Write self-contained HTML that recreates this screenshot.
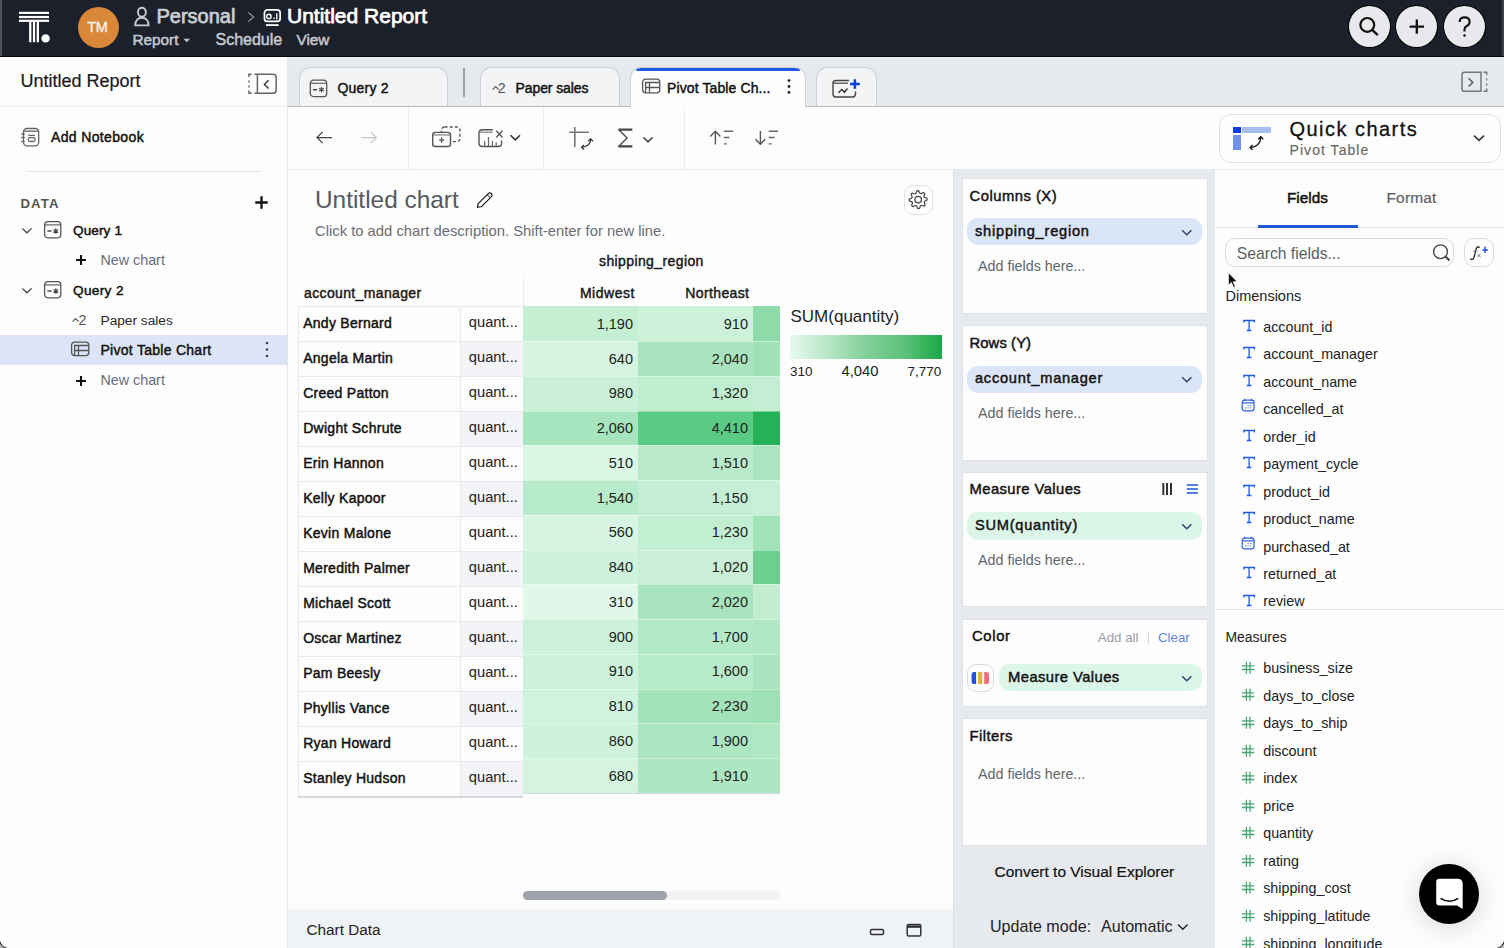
<!DOCTYPE html>
<html><head><meta charset="utf-8">
<style>
*{box-sizing:border-box;margin:0;padding:0}
html,body{width:1504px;height:948px;overflow:hidden;background:#b8b8b8}
body{font-family:"Liberation Sans",sans-serif;color:#1a1a1a;position:relative}
.a{position:absolute}
.t{position:absolute;white-space:nowrap;line-height:1}
#app{position:absolute;left:0;top:0;width:1504px;height:948px;background:#fdfdfd;border-radius:0 0 9px 9px;overflow:hidden;box-shadow:0 0 0 1px #222}

</style></head><body>
<div id="app">
<div class="a" style="left:0px;top:0px;width:1504px;height:57px;background:#1c202b;"></div>
<div class="a" style="left:0px;top:56px;width:1504px;height:1px;background:#07080b;"></div>
<div class="a" style="left:0px;top:0px;width:1.6px;height:56px;background:#4f535d;"></div>
<div class="a" style="left:1502px;top:0px;width:2px;height:56px;background:#3d414b;"></div>
<svg class="a" style="left:16px;top:8px;" width="40" height="40" viewBox="0 0 40 40" fill="none">
<rect x="3" y="3.8" width="30" height="2.2" fill="#fff"/>
<rect x="3" y="7.9" width="30" height="2.2" fill="#fff"/>
<rect x="3" y="11.7" width="30" height="2.2" fill="#fff"/>
<rect x="13.1" y="13" width="2.3" height="21.2" fill="#fff"/>
<rect x="16.9" y="13" width="2.2" height="21.2" fill="#fff"/>
<rect x="20.7" y="13" width="2.3" height="21.2" fill="#fff"/>
<circle cx="29.6" cy="30.4" r="4.2" fill="#fff"/></svg>
<div class="a" style="left:77.5px;top:6.5px;width:41px;height:41px;background:#d9883a;border-radius:50%"></div>
<div class="t" style="left:87.2px;top:19.93px;font-size:14.5px;color:#fdf3ea;letter-spacing:-0.3px;-webkit-text-stroke:0.35px #fdf3ea;">TM</div>
<svg class="a" style="left:132px;top:6px;" width="20" height="22" viewBox="0 0 20 22" fill="none"><rect x="6" y="1.8" width="7.8" height="8.8" rx="3.9" stroke="#c9ccd1" stroke-width="1.9"/>
<path d="M3.2 19.4 C3.2 14.5 6.3 11.8 9.9 11.8 C13.5 11.8 16.6 14.5 16.6 19.4 Z" stroke="#c9ccd1" stroke-width="1.9" stroke-linejoin="round"/></svg>
<div class="t" style="left:156.5px;top:5.77px;font-size:20px;color:#c9cdd2;-webkit-text-stroke:0.75px #c9cdd2;">Personal</div>
<svg class="a" style="left:246px;top:11px;" width="10" height="12" viewBox="0 0 10 12" fill="none"><path d="M2.3 1.6 L7.6 6.1 L2.3 10.6" stroke="#8a8f98" stroke-width="1.3"/></svg>
<svg class="a" style="left:262px;top:7px;" width="21" height="21" viewBox="0 0 21 21" fill="none"><rect x="2.45" y="2.85" width="15.7" height="11.6" rx="3" stroke="#fff" stroke-width="1.7"/>
<circle cx="6.9" cy="9.4" r="2.2" stroke="#fff" stroke-width="1.4"/>
<rect x="11.4" y="10.5" width="1.3" height="1.6" fill="#fff"/>
<rect x="14.1" y="6.2" width="1.3" height="6.4" fill="#fff"/>
<rect x="4" y="17.2" width="12.6" height="1.8" fill="#fff"/></svg>
<div class="t" style="left:287.0px;top:4.92px;font-size:21px;color:#ffffff;-webkit-text-stroke:0.75px #fff;">Untitled Report</div>
<div class="t" style="left:132.5px;top:32.05px;font-size:15.3px;color:#c5c9cf;-webkit-text-stroke:0.5px #c5c9cf;">Report</div>
<svg class="a" style="left:183px;top:38px;" width="8" height="5" viewBox="0 0 8 5" fill="none"><path d="M0.5 0.8 L7 0.8 L3.75 4.2 Z" fill="#c5c9cf"/></svg>
<div class="t" style="left:215.5px;top:32.26px;font-size:16px;color:#c5c9cf;-webkit-text-stroke:0.5px #c5c9cf;">Schedule</div>
<div class="t" style="left:296.5px;top:32.05px;font-size:15.3px;color:#c5c9cf;-webkit-text-stroke:0.5px #c5c9cf;">View</div>
<div class="a" style="left:1348.8px;top:6.3px;width:41px;height:41px;background:#e8e9ec;border-radius:50%;box-shadow:0 0 0 1px #000"></div>
<div class="a" style="left:1395.9px;top:6.3px;width:41px;height:41px;background:#e8e9ec;border-radius:50%;box-shadow:0 0 0 1px #000"></div>
<div class="a" style="left:1443.8px;top:6.3px;width:41px;height:41px;background:#e8e9ec;border-radius:50%;box-shadow:0 0 0 1px #000"></div>
<svg class="a" style="left:1355px;top:12px;" width="30" height="30" viewBox="0 0 30 30" fill="none"><circle cx="12.3" cy="12.9" r="6.9" stroke="#111" stroke-width="2.2"/><path d="M17.2 17.8 L22.8 23.2" stroke="#111" stroke-width="2.3"/></svg>
<svg class="a" style="left:1402px;top:12px;" width="30" height="30" viewBox="0 0 30 30" fill="none"><path d="M14.8 7.4 V21.8 M7.6 14.6 H22" stroke="#111" stroke-width="2.3"/></svg>
<svg class="a" style="left:1450px;top:10px;" width="30" height="30" viewBox="0 0 30 30" fill="none"><path d="M9.6 11.9 Q9.6 7.4 14.6 7.4 Q19.6 7.4 19.6 11.9 Q19.6 14.6 16.8 16 Q14.5 17.1 14.5 19.5 V21.4" stroke="#111" stroke-width="2.1"/><circle cx="14.5" cy="25.5" r="1.25" fill="#111"/></svg>
<div class="a" style="left:0px;top:57px;width:287px;height:891px;background:#fdfdfd;"></div>
<div class="a" style="left:287px;top:57px;width:1px;height:891px;background:#e4e6ea;"></div>
<div class="a" style="left:0px;top:106px;width:287px;height:1px;background:#eceef1;"></div>
<div class="t" style="left:20.5px;top:72.06px;font-size:18px;color:#1a1a1a;-webkit-text-stroke:0.2px #1a1a1a;">Untitled Report</div>
<svg class="a" style="left:246px;top:72px;" width="34" height="24" viewBox="0 0 34 24" fill="none"><path d="M5.6 2.3 H3 V5" stroke="#666" stroke-width="1.5"/>
<path d="M3 8.5 V10.5 M3 13.5 V15.5" stroke="#666" stroke-width="1.5"/>
<path d="M3 18.5 V21.3 H5.6" stroke="#666" stroke-width="1.5"/>
<path d="M8.5 2.3 H27 Q30.2 2.3 30.2 5.5 V18.1 Q30.2 21.3 27 21.3 H8.5" stroke="#666" stroke-width="1.5"/>
<path d="M11.4 2.3 V21.3" stroke="#666" stroke-width="1.5"/>
<path d="M22.6 8.3 L18.4 12.4 L22.6 16.6" stroke="#333" stroke-width="1.4"/></svg>
<svg class="a" style="left:19px;top:126px;" width="22" height="22" viewBox="0 0 22 22" fill="none"><rect x="4.5" y="2.5" width="15.2" height="17.3" rx="3.5" stroke="#666" stroke-width="1.3"/>
<path d="M4.8 5.2 H19.4" stroke="#666" stroke-width="1.3"/>
<path d="M2.4 8 H5.6 M2.4 11.5 H5.6 M2.4 15.5 H5.6" stroke="#666" stroke-width="1.3"/>
<path d="M9.3 9.4 H16" stroke="#666" stroke-width="1.3"/>
<rect x="9.3" y="11.6" width="6.7" height="3.9" rx="1.5" stroke="#666" stroke-width="1.3"/></svg>
<div class="t" style="left:51.0px;top:130.45px;font-size:14px;color:#111;letter-spacing:0.355px;-webkit-text-stroke:0.45px #111;">Add Notebook</div>
<div class="a" style="left:26px;top:171px;width:235px;height:1px;background:#e6e8eb;"></div>
<div class="t" style="left:20.5px;top:196.73px;font-size:13.2px;color:#555;font-weight:bold;letter-spacing:1.1px;">DATA</div>
<svg class="a" style="left:253px;top:194px;" width="17" height="17" viewBox="0 0 17 17" fill="none"><path d="M8.5 2.3 V14.7 M2.3 8.5 H14.7" stroke="#111" stroke-width="2.3"/></svg>
<svg class="a" style="left:21px;top:227px;" width="12" height="8" viewBox="0 0 12 8" fill="none"><path d="M1.2 1.4 L5.9 5.8 L10.6 1.4" stroke="#444" stroke-width="1.3"/></svg>
<svg class="a" style="left:42.5px;top:218.5px;" width="20" height="20" viewBox="0 0 20 20" fill="none"><rect x="1.6" y="2.6" width="16.2" height="16.2" rx="3.2" stroke="#555" stroke-width="1.3"/>
<path d="M1.8 5.9 H17.6" stroke="#555" stroke-width="1.1"/>
<path d="M4.4 12 H8.6" stroke="#444" stroke-width="1.5"/>
<path d="M12.8 9.2 V14.8 M10.4 10.6 L15.2 13.4 M15.2 10.6 L10.4 13.4" stroke="#444" stroke-width="1.1"/></svg>
<div class="t" style="left:73.0px;top:224.29px;font-size:13.6px;color:#111;letter-spacing:0.1px;-webkit-text-stroke:0.45px #111;">Query 1</div>
<svg class="a" style="left:74.5px;top:254px;" width="12" height="12" viewBox="0 0 12 12" fill="none"><path d="M6 1 V11 M1 6 H11" stroke="#111" stroke-width="2.1"/></svg>
<div class="t" style="left:100.5px;top:253.20px;font-size:14.3px;color:#6a6e74;">New chart</div>
<svg class="a" style="left:21px;top:287px;" width="12" height="8" viewBox="0 0 12 8" fill="none"><path d="M1.2 1.4 L5.9 5.8 L10.6 1.4" stroke="#444" stroke-width="1.3"/></svg>
<svg class="a" style="left:42.5px;top:278.5px;" width="20" height="20" viewBox="0 0 20 20" fill="none"><rect x="1.6" y="2.6" width="16.2" height="16.2" rx="3.2" stroke="#555" stroke-width="1.3"/>
<path d="M1.8 5.9 H17.6" stroke="#555" stroke-width="1.1"/>
<path d="M4.4 12 H8.6" stroke="#444" stroke-width="1.5"/>
<path d="M12.8 9.2 V14.8 M10.4 10.6 L15.2 13.4 M15.2 10.6 L10.4 13.4" stroke="#444" stroke-width="1.1"/></svg>
<div class="t" style="left:73.0px;top:284.19px;font-size:13.6px;color:#111;letter-spacing:0.35px;-webkit-text-stroke:0.45px #111;">Query 2</div>
<svg class="a" style="left:71px;top:316px;" width="10" height="8" viewBox="0 0 10 8" fill="none"><path d="M1.5 5.6 L4.6 2.6 L7.7 5.6" stroke="#555" stroke-width="1.1"/></svg>
<div class="t" style="left:78.6px;top:313.48px;font-size:14.2px;color:#555;">2</div>
<div class="t" style="left:100.5px;top:313.90px;font-size:13.7px;color:#2a2a2a;">Paper sales</div>
<div class="a" style="left:0px;top:335px;width:287px;height:30px;background:#dce5f7;"></div>
<svg class="a" style="left:70px;top:340px;" width="20" height="18" viewBox="0 0 20 18" fill="none"><rect x="1.6" y="2.2" width="17.2" height="13.4" rx="3" stroke="#555" stroke-width="1.3"/>
<path d="M4.6 15.4 V5.5 H18.5 M8.5 5.5 V15.4 M4.6 10.5 H18.5" stroke="#555" stroke-width="1.3"/></svg>
<div class="t" style="left:100.5px;top:343.45px;font-size:14px;color:#111;letter-spacing:0.275px;-webkit-text-stroke:0.45px #111;">Pivot Table Chart</div>
<svg class="a" style="left:264px;top:340px;" width="6" height="20" viewBox="0 0 6 20" fill="none"><circle cx="3" cy="3" r="1.3" fill="#444"/><circle cx="3" cy="9.5" r="1.3" fill="#444"/><circle cx="3" cy="16" r="1.3" fill="#444"/></svg>
<svg class="a" style="left:74.5px;top:374.5px;" width="12" height="12" viewBox="0 0 12 12" fill="none"><path d="M6 1 V11 M1 6 H11" stroke="#111" stroke-width="2.1"/></svg>
<div class="t" style="left:100.5px;top:373.20px;font-size:14.3px;color:#6a6e74;">New chart</div>
<div class="a" style="left:288px;top:57px;width:1216px;height:49px;background:#e6e9ee;"></div>
<div class="a" style="left:288px;top:106px;width:1216px;height:1px;background:#b9bdc3;"></div>
<div class="a" style="left:298.5px;top:67px;width:149.5px;height:39px;background:#f3f4f6;border:1px solid #cdd1d8;border-bottom:none;border-radius:11px 11px 0 0"></div>
<svg class="a" style="left:308px;top:77px;" width="22" height="22" viewBox="0 0 22 22" fill="none"><rect x="2.3" y="3.2" width="16.4" height="16.4" rx="3.2" stroke="#555" stroke-width="1.3"/>
<path d="M2.5 6.3 H18.5" stroke="#555" stroke-width="1.1"/>
<path d="M5 12.7 H9.2" stroke="#444" stroke-width="1.5"/>
<path d="M13.5 9.9 V15.5 M11.1 11.3 L15.9 14.1 M15.9 11.3 L11.1 14.1" stroke="#444" stroke-width="1.1"/></svg>
<div class="t" style="left:337.5px;top:81.35px;font-size:14px;color:#111;letter-spacing:0.2px;-webkit-text-stroke:0.45px #111;">Query 2</div>
<div class="a" style="left:462.5px;top:67.5px;width:2px;height:29px;background:#9da1a8;"></div>
<div class="a" style="left:479.5px;top:67px;width:140.5px;height:39px;background:#f3f4f6;border:1px solid #cdd1d8;border-bottom:none;border-radius:11px 11px 0 0"></div>
<svg class="a" style="left:490.5px;top:84px;" width="10" height="8" viewBox="0 0 10 8" fill="none"><path d="M1.5 5.6 L4.6 2.6 L7.7 5.6" stroke="#555" stroke-width="1.1"/></svg>
<div class="t" style="left:497.8px;top:81.18px;font-size:14.2px;color:#555;">2</div>
<div class="t" style="left:515.5px;top:81.35px;font-size:14px;color:#111;letter-spacing:-0.09px;-webkit-text-stroke:0.45px #111;">Paper sales</div>
<div class="a" style="left:630px;top:67px;width:175.5px;height:40px;background:#fdfdfd;border:1px solid #cdd1d8;border-bottom:none;border-radius:11px 11px 0 0;overflow:hidden"><div class="a" style="left:5px;top:0;width:164px;height:2.5px;background:#1f5ae6;border-radius:2px"></div></div>
<svg class="a" style="left:641px;top:77px;" width="20" height="18" viewBox="0 0 20 18" fill="none"><rect x="1.6" y="2.2" width="17.2" height="13.6" rx="3" stroke="#555" stroke-width="1.3"/>
<path d="M4.6 15.6 V5.5 H18.5 M8.5 5.5 V15.6 M4.6 10.5 H18.5" stroke="#555" stroke-width="1.3"/></svg>
<div class="t" style="left:667.0px;top:81.15px;font-size:14px;color:#111;letter-spacing:0.112px;-webkit-text-stroke:0.45px #111;">Pivot Table Ch...</div>
<svg class="a" style="left:786px;top:78px;" width="6" height="18" viewBox="0 0 6 18" fill="none"><circle cx="3" cy="2.6" r="1.4" fill="#222"/><circle cx="3" cy="8.5" r="1.4" fill="#222"/><circle cx="3" cy="14.4" r="1.4" fill="#222"/></svg>
<div class="a" style="left:815.5px;top:67px;width:61.5px;height:39px;background:#f3f4f6;border:1px solid #cdd1d8;border-bottom:none;border-radius:11px 11px 0 0"></div>
<svg class="a" style="left:830px;top:76px;" width="34" height="24" viewBox="0 0 34 24" fill="none"><path d="M19 4.5 H6 Q3 4.5 3 7.5 V18 Q3 21 6 21 H22.5 Q25.5 21 25.5 18 V15.5" stroke="#444" stroke-width="1.4"/>
<path d="M3.5 7.2 H18" stroke="#444" stroke-width="1.2"/>
<path d="M8.3 16.7 L11.8 13.4 L14.3 16.3 L17.5 12.5" stroke="#333" stroke-width="1.4"/>
<path d="M24.9 3.3 V12.8 M20 8 H29.8" stroke="#0b3ee0" stroke-width="2.5"/></svg>
<svg class="a" style="left:1460px;top:70px;" width="34" height="25" viewBox="0 0 34 25" fill="none"><path d="M4.4 2.3 H21 V21.3 H4.4 Q2 21.3 2 18.9 V4.7 Q2 2.3 4.4 2.3 Z" stroke="#777" stroke-width="1.5"/>
<path d="M23.5 2.3 H26.7 V5 M26.7 8.5 V10.5 M26.7 13.5 V15.5 M26.7 18.5 V21.3 H23.5" stroke="#777" stroke-width="1.5"/>
<path d="M8.6 8.3 L12.8 12.4 L8.6 16.6" stroke="#555" stroke-width="1.4"/></svg>
<div class="a" style="left:288px;top:107px;width:1216px;height:63px;background:#fdfdfd;"></div>
<div class="a" style="left:288px;top:169px;width:1216px;height:1px;background:#e8eaee;"></div>
<div class="a" style="left:408px;top:107px;width:1px;height:62px;background:#eceef1;"></div>
<div class="a" style="left:543px;top:107px;width:1px;height:62px;background:#eceef1;"></div>
<div class="a" style="left:684px;top:107px;width:1px;height:62px;background:#eceef1;"></div>
<svg class="a" style="left:312px;top:128px;" width="24" height="20" viewBox="0 0 24 20" fill="none"><path d="M20 9.5 H5 M10.6 3.9 L5 9.5 L10.6 15.1" stroke="#444" stroke-width="1.25"/></svg>
<svg class="a" style="left:357px;top:128px;" width="24" height="20" viewBox="0 0 24 20" fill="none"><path d="M4.4 9.5 H19.4 M13.8 3.9 L19.4 9.5 L13.8 15.1" stroke="#c4c7cc" stroke-width="1.25"/></svg>
<svg class="a" style="left:430px;top:124px;" width="34" height="26" viewBox="0 0 34 26" fill="none"><rect x="11.5" y="3" width="18.4" height="14.6" rx="3" stroke="#555" stroke-width="1.4" stroke-dasharray="3 2.2"/>
<rect x="2.7" y="8.4" width="17.8" height="14.1" rx="2.6" fill="#fdfdfd" stroke="#555" stroke-width="1.4"/>
<path d="M3 10.9 H20.2" stroke="#888" stroke-width="1.3"/>
<path d="M11.6 13.5 V18.8 M9 16.1 H14.3" stroke="#555" stroke-width="1.4"/></svg>
<svg class="a" style="left:476px;top:126px;" width="48" height="24" viewBox="0 0 48 24" fill="none"><path d="M16.8 3.8 H6.5 Q3 3.8 3 7.3 V17 Q3 20.5 6.5 20.5 H22.2 Q25.6 20.5 25.6 17 V14.5" stroke="#555" stroke-width="1.4"/>
<path d="M3.5 6.2 H16.8" stroke="#888" stroke-width="1.3"/>
<path d="M8.7 20 V15 M12.5 20 V11.1 M16.4 20 V15 M20.2 20 V16.3" stroke="#666" stroke-width="1.2"/>
<path d="M20.2 4.8 L26.5 11.5 M26.5 4.8 L20.2 11.5" stroke="#555" stroke-width="1.3"/>
<path d="M34.5 9.2 L39.3 13.9 L44 9.2" stroke="#333" stroke-width="1.5"/></svg>
<svg class="a" style="left:566px;top:124px;" width="30" height="28" viewBox="0 0 30 28" fill="none"><path d="M8.8 3 V23 M3.3 8.3 H22.9" stroke="#777" stroke-width="1.6"/>
<path d="M15.6 23.2 C19 23.2 24.6 21.5 24.6 15" stroke="#333" stroke-width="1.3"/>
<path d="M22.2 17.2 L24.6 14.8 L27 17.2 M18 21 L15.6 23.3 L18 25.6" stroke="#333" stroke-width="1.3"/></svg>
<svg class="a" style="left:615px;top:127px;" width="42" height="22" viewBox="0 0 42 22" fill="none"><path d="M3.4 2.6 H17.3 M3.4 19.4 H17.3" stroke="#444" stroke-width="2.1"/>
<path d="M3.8 2.7 L12.1 11 L3.8 19.3" stroke="#444" stroke-width="1.3"/>
<path d="M28.5 10.5 L33 14.8 L37.5 10.5" stroke="#333" stroke-width="1.5"/></svg>
<svg class="a" style="left:706px;top:127px;" width="32" height="20" viewBox="0 0 32 20" fill="none"><path d="M9.4 17.5 V4 M4.2 9.5 L9.4 4.3 L14.4 9.5" stroke="#555" stroke-width="1.4"/>
<path d="M17.9 4.3 H27.2 M17.9 10.5 H23.3 M17.9 16.9 H20.9" stroke="#666" stroke-width="1.4"/></svg>
<svg class="a" style="left:751px;top:127px;" width="32" height="20" viewBox="0 0 32 20" fill="none"><path d="M9.4 4 V17.5 M4.4 12.2 L9.4 17.2 L14.2 12.2" stroke="#555" stroke-width="1.4"/>
<path d="M17.7 4.3 H27.1 M17.7 10.5 H23.5 M17.7 16.9 H20.8" stroke="#666" stroke-width="1.4"/></svg>
<div class="a" style="left:1218.5px;top:113.5px;width:282px;height:49px;background:#fdfdfd;border:1px solid #dcdfe4;border-radius:12px"></div>
<div class="a" style="left:1233.2px;top:127.1px;width:7.6px;height:5.7px;background:#0a3de0;"></div>
<div class="a" style="left:1242.3px;top:127.1px;width:29.1px;height:5.7px;background:#a6bff0;"></div>
<div class="a" style="left:1233.2px;top:134.9px;width:7.6px;height:14.7px;background:#6f91ea;"></div>
<svg class="a" style="left:1246px;top:133px;" width="20" height="18" viewBox="0 0 20 18" fill="none"><path d="M4.3 14.3 C9 14.3 14.7 11.5 14.7 3.8" stroke="#111" stroke-width="1.3"/>
<path d="M12.2 6.2 L14.7 3.6 L17.2 6.2 M6.6 12 L4.1 14.4 L6.6 16.8" stroke="#111" stroke-width="1.3"/></svg>
<div class="t" style="left:1289.5px;top:119.07px;font-size:20px;color:#111;letter-spacing:1.464px;-webkit-text-stroke:0.3px #111;">Quick charts</div>
<div class="t" style="left:1289.5px;top:142.95px;font-size:14px;color:#666;letter-spacing:1.06px;-webkit-text-stroke:0.15px #666;">Pivot Table</div>
<svg class="a" style="left:1470px;top:130px;" width="18" height="14" viewBox="0 0 18 14" fill="none"><path d="M4 5.6 L9 10.4 L14 5.6" stroke="#333" stroke-width="1.5"/></svg>
<div class="a" style="left:288px;top:170px;width:665px;height:739px;background:#fdfdfd;"></div>
<div class="t" style="left:315.0px;top:187.85px;font-size:24.4px;color:#555a60;">Untitled chart</div>
<svg class="a" style="left:473px;top:190px;" width="22" height="22" viewBox="0 0 22 22" fill="none"><path d="M4.5 17.3 L5.1 13.7 L15.6 3.3 Q16.8 2.3 18 3.3 L18.7 4 Q19.7 5.2 18.7 6.4 L8.2 16.8 Z" stroke="#111" stroke-width="1.15" stroke-linejoin="round"/>
<path d="M14.3 4.8 L17.2 7.7" stroke="#111" stroke-width="1"/></svg>
<div class="a" style="left:903.5px;top:184.5px;width:29.5px;height:30px;border:1px solid #dfe2e7;border-radius:9px;background:#fdfdfd"></div>
<svg class="a" style="left:903px;top:184px;" width="31" height="31" viewBox="0 0 31 31" fill="none"><path d="M13.89 6.80 L15.64 6.71 L16.80 9.20 L18.02 9.63 L20.50 8.45 L21.79 9.62 L20.86 12.21 L21.41 13.38 L24.00 14.29 L24.09 16.04 L21.60 17.20 L21.17 18.42 L22.35 20.90 L21.18 22.19 L18.59 21.26 L17.42 21.81 L16.51 24.40 L14.76 24.49 L13.60 22.00 L12.38 21.57 L9.90 22.75 L8.61 21.58 L9.54 18.99 L8.99 17.82 L6.40 16.91 L6.31 15.16 L8.80 14.00 L9.23 12.78 L8.05 10.30 L9.22 9.01 L11.81 9.94 L12.98 9.39 Z" stroke="#444" stroke-width="1.2" stroke-linejoin="round"/><circle cx="15.2" cy="15.6" r="3.3" stroke="#444" stroke-width="1.3"/></svg>
<div class="t" style="left:315.0px;top:223.87px;font-size:14.8px;color:#6a6e74;">Click to add chart description. Shift-enter for new line.</div>
<div class="t" style="left:599.0px;top:253.55px;font-size:14px;color:#1a1a1a;letter-spacing:0.393px;-webkit-text-stroke:0.45px #1a1a1a;">shipping_region</div>
<div class="t" style="left:304.0px;top:285.65px;font-size:14px;color:#1a1a1a;letter-spacing:0.364px;-webkit-text-stroke:0.45px #1a1a1a;">account_manager</div>
<div class="t" style="right:869.0px;top:285.65px;font-size:14px;color:#1a1a1a;text-align:right;letter-spacing:0.533px;-webkit-text-stroke:0.45px #1a1a1a;">Midwest</div>
<div class="t" style="right:754.6px;top:285.65px;font-size:14px;color:#1a1a1a;text-align:right;letter-spacing:0.387px;-webkit-text-stroke:0.45px #1a1a1a;">Northeast</div>
<div class="a" style="left:523px;top:278px;width:1px;height:28px;background:#e6e8ee;"></div>
<div class="a" style="left:298px;top:306px;width:225px;height:491px;background:#fdfdfd;"></div>
<div class="a" style="left:298px;top:306px;width:225px;height:1px;background:#e8e9ee;"></div>
<div class="a" style="left:523px;top:306.40px;width:115px;height:34.75px;background:#c4efd3;"></div>
<div class="a" style="left:638px;top:306.40px;width:115px;height:34.75px;background:#cdf2da;"></div>
<div class="a" style="left:753px;top:306.40px;width:27px;height:34.75px;background:#8edbaa;"></div>
<div class="t" style="left:303.2px;top:315.55px;font-size:14px;color:#111;letter-spacing:0.27px;-webkit-text-stroke:0.45px #111;">Andy Bernard</div>
<div class="t" style="left:468.8px;top:314.96px;font-size:14.7px;color:#222;">quant...</div>
<div class="t" style="right:871.0px;top:316.83px;font-size:14.5px;color:#222;text-align:right;">1,190</div>
<div class="t" style="right:756.0px;top:316.83px;font-size:14.5px;color:#222;text-align:right;">910</div>
<div class="a" style="left:461px;top:341px;width:62px;height:35px;background:#f3f4f7;"></div>
<div class="a" style="left:298px;top:341px;width:225px;height:1px;background:#e8e9ee;"></div>
<div class="a" style="left:523px;top:341.15px;width:115px;height:34.75px;background:#d6f5e1;"></div>
<div class="a" style="left:638px;top:341.15px;width:115px;height:34.75px;background:#a8e5be;"></div>
<div class="a" style="left:753px;top:341.15px;width:27px;height:34.75px;background:#a0e2b8;"></div>
<div class="a" style="left:523px;top:341.15px;width:257px;height:1px;background:rgba(255,255,255,0.4);"></div>
<div class="t" style="left:303.2px;top:350.55px;font-size:14px;color:#111;letter-spacing:0.27px;-webkit-text-stroke:0.45px #111;">Angela Martin</div>
<div class="t" style="left:468.8px;top:349.96px;font-size:14.7px;color:#222;">quant...</div>
<div class="t" style="right:871.0px;top:351.58px;font-size:14.5px;color:#222;text-align:right;">640</div>
<div class="t" style="right:756.0px;top:351.58px;font-size:14.5px;color:#222;text-align:right;">2,040</div>
<div class="a" style="left:298px;top:376px;width:225px;height:1px;background:#e8e9ee;"></div>
<div class="a" style="left:523px;top:375.90px;width:115px;height:34.75px;background:#caf1d8;"></div>
<div class="a" style="left:638px;top:375.90px;width:115px;height:34.75px;background:#bfedd0;"></div>
<div class="a" style="left:753px;top:375.90px;width:27px;height:34.75px;background:#c4eed4;"></div>
<div class="a" style="left:523px;top:375.90px;width:257px;height:1px;background:rgba(255,255,255,0.4);"></div>
<div class="t" style="left:303.2px;top:385.55px;font-size:14px;color:#111;letter-spacing:0.27px;-webkit-text-stroke:0.45px #111;">Creed Patton</div>
<div class="t" style="left:468.8px;top:384.96px;font-size:14.7px;color:#222;">quant...</div>
<div class="t" style="right:871.0px;top:386.33px;font-size:14.5px;color:#222;text-align:right;">980</div>
<div class="t" style="right:756.0px;top:386.33px;font-size:14.5px;color:#222;text-align:right;">1,320</div>
<div class="a" style="left:461px;top:411px;width:62px;height:35px;background:#f3f4f7;"></div>
<div class="a" style="left:298px;top:411px;width:225px;height:1px;background:#e8e9ee;"></div>
<div class="a" style="left:523px;top:410.65px;width:115px;height:34.75px;background:#a7e5be;"></div>
<div class="a" style="left:638px;top:410.65px;width:115px;height:34.75px;background:#5acb84;"></div>
<div class="a" style="left:753px;top:410.65px;width:27px;height:34.75px;background:#25b256;"></div>
<div class="a" style="left:523px;top:410.65px;width:257px;height:1px;background:rgba(255,255,255,0.4);"></div>
<div class="t" style="left:303.2px;top:420.55px;font-size:14px;color:#111;letter-spacing:0.27px;-webkit-text-stroke:0.45px #111;">Dwight Schrute</div>
<div class="t" style="left:468.8px;top:419.96px;font-size:14.7px;color:#222;">quant...</div>
<div class="t" style="right:871.0px;top:421.08px;font-size:14.5px;color:#222;text-align:right;">2,060</div>
<div class="t" style="right:756.0px;top:421.08px;font-size:14.5px;color:#222;text-align:right;">4,410</div>
<div class="a" style="left:298px;top:446px;width:225px;height:1px;background:#e8e9ee;"></div>
<div class="a" style="left:523px;top:445.40px;width:115px;height:34.75px;background:#daf6e4;"></div>
<div class="a" style="left:638px;top:445.40px;width:115px;height:34.75px;background:#b9ebcb;"></div>
<div class="a" style="left:753px;top:445.40px;width:27px;height:34.75px;background:#a9e6c0;"></div>
<div class="a" style="left:523px;top:445.40px;width:257px;height:1px;background:rgba(255,255,255,0.4);"></div>
<div class="t" style="left:303.2px;top:455.55px;font-size:14px;color:#111;letter-spacing:0.27px;-webkit-text-stroke:0.45px #111;">Erin Hannon</div>
<div class="t" style="left:468.8px;top:454.96px;font-size:14.7px;color:#222;">quant...</div>
<div class="t" style="right:871.0px;top:455.83px;font-size:14.5px;color:#222;text-align:right;">510</div>
<div class="t" style="right:756.0px;top:455.83px;font-size:14.5px;color:#222;text-align:right;">1,510</div>
<div class="a" style="left:461px;top:481px;width:62px;height:35px;background:#f3f4f7;"></div>
<div class="a" style="left:298px;top:481px;width:225px;height:1px;background:#e8e9ee;"></div>
<div class="a" style="left:523px;top:480.15px;width:115px;height:34.75px;background:#b8ebcb;"></div>
<div class="a" style="left:638px;top:480.15px;width:115px;height:34.75px;background:#c5efd4;"></div>
<div class="a" style="left:753px;top:480.15px;width:27px;height:34.75px;background:#c8f0d6;"></div>
<div class="a" style="left:523px;top:480.15px;width:257px;height:1px;background:rgba(255,255,255,0.4);"></div>
<div class="t" style="left:303.2px;top:490.55px;font-size:14px;color:#111;letter-spacing:0.27px;-webkit-text-stroke:0.45px #111;">Kelly Kapoor</div>
<div class="t" style="left:468.8px;top:489.96px;font-size:14.7px;color:#222;">quant...</div>
<div class="t" style="right:871.0px;top:490.58px;font-size:14.5px;color:#222;text-align:right;">1,540</div>
<div class="t" style="right:756.0px;top:490.58px;font-size:14.5px;color:#222;text-align:right;">1,150</div>
<div class="a" style="left:298px;top:516px;width:225px;height:1px;background:#e8e9ee;"></div>
<div class="a" style="left:523px;top:514.90px;width:115px;height:34.75px;background:#d8f5e3;"></div>
<div class="a" style="left:638px;top:514.90px;width:115px;height:34.75px;background:#c2eed2;"></div>
<div class="a" style="left:753px;top:514.90px;width:27px;height:34.75px;background:#a3e3ba;"></div>
<div class="a" style="left:523px;top:514.90px;width:257px;height:1px;background:rgba(255,255,255,0.4);"></div>
<div class="t" style="left:303.2px;top:525.55px;font-size:14px;color:#111;letter-spacing:0.27px;-webkit-text-stroke:0.45px #111;">Kevin Malone</div>
<div class="t" style="left:468.8px;top:524.96px;font-size:14.7px;color:#222;">quant...</div>
<div class="t" style="right:871.0px;top:525.33px;font-size:14.5px;color:#222;text-align:right;">560</div>
<div class="t" style="right:756.0px;top:525.33px;font-size:14.5px;color:#222;text-align:right;">1,230</div>
<div class="a" style="left:461px;top:551px;width:62px;height:35px;background:#f3f4f7;"></div>
<div class="a" style="left:298px;top:551px;width:225px;height:1px;background:#e8e9ee;"></div>
<div class="a" style="left:523px;top:549.65px;width:115px;height:34.75px;background:#cff2dc;"></div>
<div class="a" style="left:638px;top:549.65px;width:115px;height:34.75px;background:#c9f0d7;"></div>
<div class="a" style="left:753px;top:549.65px;width:27px;height:34.75px;background:#6ccf90;"></div>
<div class="a" style="left:523px;top:549.65px;width:257px;height:1px;background:rgba(255,255,255,0.4);"></div>
<div class="t" style="left:303.2px;top:560.55px;font-size:14px;color:#111;letter-spacing:0.27px;-webkit-text-stroke:0.45px #111;">Meredith Palmer</div>
<div class="t" style="left:468.8px;top:559.96px;font-size:14.7px;color:#222;">quant...</div>
<div class="t" style="right:871.0px;top:560.08px;font-size:14.5px;color:#222;text-align:right;">840</div>
<div class="t" style="right:756.0px;top:560.08px;font-size:14.5px;color:#222;text-align:right;">1,020</div>
<div class="a" style="left:298px;top:586px;width:225px;height:1px;background:#e8e9ee;"></div>
<div class="a" style="left:523px;top:584.40px;width:115px;height:34.75px;background:#e0f8e9;"></div>
<div class="a" style="left:638px;top:584.40px;width:115px;height:34.75px;background:#a8e5bf;"></div>
<div class="a" style="left:753px;top:584.40px;width:27px;height:34.75px;background:#c2edd1;"></div>
<div class="a" style="left:523px;top:584.40px;width:257px;height:1px;background:rgba(255,255,255,0.4);"></div>
<div class="t" style="left:303.2px;top:595.55px;font-size:14px;color:#111;letter-spacing:0.27px;-webkit-text-stroke:0.45px #111;">Michael Scott</div>
<div class="t" style="left:468.8px;top:594.96px;font-size:14.7px;color:#222;">quant...</div>
<div class="t" style="right:871.0px;top:594.83px;font-size:14.5px;color:#222;text-align:right;">310</div>
<div class="t" style="right:756.0px;top:594.83px;font-size:14.5px;color:#222;text-align:right;">2,020</div>
<div class="a" style="left:461px;top:621px;width:62px;height:35px;background:#f3f4f7;"></div>
<div class="a" style="left:298px;top:621px;width:225px;height:1px;background:#e8e9ee;"></div>
<div class="a" style="left:523px;top:619.15px;width:115px;height:34.75px;background:#cdf2da;"></div>
<div class="a" style="left:638px;top:619.15px;width:115px;height:34.75px;background:#b3e9c7;"></div>
<div class="a" style="left:753px;top:619.15px;width:27px;height:34.75px;background:#b0e8c4;"></div>
<div class="a" style="left:523px;top:619.15px;width:257px;height:1px;background:rgba(255,255,255,0.4);"></div>
<div class="t" style="left:303.2px;top:630.55px;font-size:14px;color:#111;letter-spacing:0.27px;-webkit-text-stroke:0.45px #111;">Oscar Martinez</div>
<div class="t" style="left:468.8px;top:629.96px;font-size:14.7px;color:#222;">quant...</div>
<div class="t" style="right:871.0px;top:629.58px;font-size:14.5px;color:#222;text-align:right;">900</div>
<div class="t" style="right:756.0px;top:629.58px;font-size:14.5px;color:#222;text-align:right;">1,700</div>
<div class="a" style="left:298px;top:656px;width:225px;height:1px;background:#e8e9ee;"></div>
<div class="a" style="left:523px;top:653.90px;width:115px;height:34.75px;background:#cdf2da;"></div>
<div class="a" style="left:638px;top:653.90px;width:115px;height:34.75px;background:#b6eac9;"></div>
<div class="a" style="left:753px;top:653.90px;width:27px;height:34.75px;background:#a8e5be;"></div>
<div class="a" style="left:523px;top:653.90px;width:257px;height:1px;background:rgba(255,255,255,0.4);"></div>
<div class="t" style="left:303.2px;top:665.55px;font-size:14px;color:#111;letter-spacing:0.27px;-webkit-text-stroke:0.45px #111;">Pam Beesly</div>
<div class="t" style="left:468.8px;top:664.96px;font-size:14.7px;color:#222;">quant...</div>
<div class="t" style="right:871.0px;top:664.33px;font-size:14.5px;color:#222;text-align:right;">910</div>
<div class="t" style="right:756.0px;top:664.33px;font-size:14.5px;color:#222;text-align:right;">1,600</div>
<div class="a" style="left:461px;top:691px;width:62px;height:35px;background:#f3f4f7;"></div>
<div class="a" style="left:298px;top:691px;width:225px;height:1px;background:#e8e9ee;"></div>
<div class="a" style="left:523px;top:688.65px;width:115px;height:34.75px;background:#d0f3dd;"></div>
<div class="a" style="left:638px;top:688.65px;width:115px;height:34.75px;background:#a2e3ba;"></div>
<div class="a" style="left:753px;top:688.65px;width:27px;height:34.75px;background:#9de1b5;"></div>
<div class="a" style="left:523px;top:688.65px;width:257px;height:1px;background:rgba(255,255,255,0.4);"></div>
<div class="t" style="left:303.2px;top:700.55px;font-size:14px;color:#111;letter-spacing:0.27px;-webkit-text-stroke:0.45px #111;">Phyllis Vance</div>
<div class="t" style="left:468.8px;top:699.96px;font-size:14.7px;color:#222;">quant...</div>
<div class="t" style="right:871.0px;top:699.08px;font-size:14.5px;color:#222;text-align:right;">810</div>
<div class="t" style="right:756.0px;top:699.08px;font-size:14.5px;color:#222;text-align:right;">2,230</div>
<div class="a" style="left:298px;top:726px;width:225px;height:1px;background:#e8e9ee;"></div>
<div class="a" style="left:523px;top:723.40px;width:115px;height:34.75px;background:#cef2db;"></div>
<div class="a" style="left:638px;top:723.40px;width:115px;height:34.75px;background:#ace7c2;"></div>
<div class="a" style="left:753px;top:723.40px;width:27px;height:34.75px;background:#b0e8c4;"></div>
<div class="a" style="left:523px;top:723.40px;width:257px;height:1px;background:rgba(255,255,255,0.4);"></div>
<div class="t" style="left:303.2px;top:735.55px;font-size:14px;color:#111;letter-spacing:0.27px;-webkit-text-stroke:0.45px #111;">Ryan Howard</div>
<div class="t" style="left:468.8px;top:734.96px;font-size:14.7px;color:#222;">quant...</div>
<div class="t" style="right:871.0px;top:733.83px;font-size:14.5px;color:#222;text-align:right;">860</div>
<div class="t" style="right:756.0px;top:733.83px;font-size:14.5px;color:#222;text-align:right;">1,900</div>
<div class="a" style="left:461px;top:761px;width:62px;height:35px;background:#f3f4f7;"></div>
<div class="a" style="left:298px;top:761px;width:225px;height:1px;background:#e8e9ee;"></div>
<div class="a" style="left:523px;top:758.15px;width:115px;height:34.75px;background:#d4f4e0;"></div>
<div class="a" style="left:638px;top:758.15px;width:115px;height:34.75px;background:#ace7c2;"></div>
<div class="a" style="left:753px;top:758.15px;width:27px;height:34.75px;background:#ade7c1;"></div>
<div class="a" style="left:523px;top:758.15px;width:257px;height:1px;background:rgba(255,255,255,0.4);"></div>
<div class="t" style="left:303.2px;top:770.55px;font-size:14px;color:#111;letter-spacing:0.27px;-webkit-text-stroke:0.45px #111;">Stanley Hudson</div>
<div class="t" style="left:468.8px;top:769.96px;font-size:14.7px;color:#222;">quant...</div>
<div class="t" style="right:871.0px;top:768.58px;font-size:14.5px;color:#222;text-align:right;">680</div>
<div class="t" style="right:756.0px;top:768.58px;font-size:14.5px;color:#222;text-align:right;">1,910</div>
<div class="a" style="left:298px;top:306px;width:1px;height:491px;background:#e8e9ee;"></div>
<div class="a" style="left:460px;top:306px;width:1px;height:491px;background:#e8e9ee;"></div>
<div class="a" style="left:298px;top:795.8px;width:225px;height:1.8px;background:#d6d8dc;"></div>
<div class="a" style="left:523px;top:792.9px;width:257px;height:1.2px;background:#d3d6da;"></div>
<div class="t" style="left:790.5px;top:307.91px;font-size:17px;color:#222;">SUM(quantity)</div>
<div class="a" style="left:790.4px;top:334.9px;width:151.4px;height:24.2px;background:linear-gradient(90deg,#e6faef 0%,#b8e6c6 25%,#82cf99 50%,#5ec27b 75%,#1aa845 100%);"></div>
<div class="t" style="left:790.0px;top:364.67px;font-size:13.5px;color:#222;">310</div>
<div class="t" style="left:841.5px;top:363.57px;font-size:14.8px;color:#222;">4,040</div>
<div class="t" style="left:907.5px;top:364.67px;font-size:13.5px;color:#222;">7,770</div>
<div class="a" style="left:523px;top:891px;width:257px;height:9px;background:#f1f2f4;border-radius:4.5px"></div>
<div class="a" style="left:523px;top:891px;width:143.5px;height:9px;background:#9ea3ab;border-radius:4.5px"></div>
<div class="a" style="left:288px;top:909px;width:665px;height:39px;background:#eff2f6;"></div>
<div class="t" style="left:306.5px;top:922.25px;font-size:15.3px;color:#222;">Chart Data</div>
<svg class="a" style="left:868px;top:926px;" width="18" height="12" viewBox="0 0 18 12" fill="none"><rect x="2.5" y="3.6" width="13" height="5" rx="1.5" stroke="#333" stroke-width="1.5"/></svg>
<svg class="a" style="left:905px;top:921px;" width="18" height="18" viewBox="0 0 18 18" fill="none"><rect x="2.2" y="3.5" width="13.6" height="11.4" rx="1.5" stroke="#333" stroke-width="1.5"/><path d="M2.2 5.6 H15.8" stroke="#333" stroke-width="2.5"/></svg>
<div class="a" style="left:953px;top:170px;width:262px;height:778px;background:#e6e9ee;"></div>
<div class="a" style="left:953px;top:170px;width:1px;height:778px;background:#dcdfe4;"></div>
<div class="a" style="left:961.5px;top:178px;width:246px;height:136px;background:#fdfdfd;border:1px solid #dde0e5"></div>
<div class="t" style="left:969.5px;top:189.17px;font-size:14.8px;color:#111;letter-spacing:0.49px;-webkit-text-stroke:0.45px #111;">Columns (X)</div>
<div class="a" style="left:967.4px;top:218.4px;width:234.3px;height:27px;background:#dbe5f8;border-radius:11px"></div>
<div class="t" style="left:975.0px;top:224.14px;font-size:14.6px;color:#111;letter-spacing:0.779px;-webkit-text-stroke:0.45px #111;">shipping_region</div>
<svg class="a" style="left:1180.5px;top:229px;" width="12" height="8" viewBox="0 0 12 8" fill="none"><path d="M1.2 1.3 L5.8 5.7 L10.4 1.3" stroke="#2b3a6b" stroke-width="1.4"/></svg>
<div class="t" style="left:978.0px;top:259.20px;font-size:14.3px;color:#62666c;">Add fields here...</div>
<div class="a" style="left:961.5px;top:324.5px;width:246px;height:136.0px;background:#fdfdfd;border:1px solid #dde0e5"></div>
<div class="t" style="left:969.5px;top:336.37px;font-size:14.8px;color:#111;letter-spacing:0.1px;-webkit-text-stroke:0.45px #111;">Rows (Y)</div>
<div class="a" style="left:967.4px;top:365.6px;width:234.3px;height:27px;background:#dbe5f8;border-radius:11px"></div>
<div class="t" style="left:975.0px;top:371.34px;font-size:14.6px;color:#111;letter-spacing:0.75px;-webkit-text-stroke:0.45px #111;">account_manager</div>
<svg class="a" style="left:1180.5px;top:376px;" width="12" height="8" viewBox="0 0 12 8" fill="none"><path d="M1.2 1.3 L5.8 5.7 L10.4 1.3" stroke="#2b3a6b" stroke-width="1.4"/></svg>
<div class="t" style="left:978.0px;top:406.40px;font-size:14.3px;color:#62666c;">Add fields here...</div>
<div class="a" style="left:961.5px;top:471.8px;width:246px;height:135.2px;background:#fdfdfd;border:1px solid #dde0e5"></div>
<div class="t" style="left:969.5px;top:482.27px;font-size:14.8px;color:#111;letter-spacing:0.415px;-webkit-text-stroke:0.45px #111;">Measure Values</div>
<svg class="a" style="left:1160px;top:481px;" width="14" height="16" viewBox="0 0 14 16" fill="none"><path d="M3.3 2 V14 M7 2 V14 M11 2 V14" stroke="#333" stroke-width="2"/></svg>
<svg class="a" style="left:1184px;top:482px;" width="16" height="14" viewBox="0 0 16 14" fill="none"><path d="M2.8 3 H13.9 M2.8 7 H13.9 M2.8 11 H13.9" stroke="#4f7fe0" stroke-width="1.9"/></svg>
<div class="a" style="left:967.2px;top:512px;width:234.8px;height:27.6px;background:#dcf5e9;border-radius:11px"></div>
<div class="t" style="left:975.0px;top:517.64px;font-size:14.6px;color:#111;letter-spacing:0.75px;-webkit-text-stroke:0.45px #111;">SUM(quantity)</div>
<svg class="a" style="left:1180.5px;top:523px;" width="12" height="8" viewBox="0 0 12 8" fill="none"><path d="M1.2 1.3 L5.8 5.7 L10.4 1.3" stroke="#2b3a6b" stroke-width="1.4"/></svg>
<div class="t" style="left:978.0px;top:552.90px;font-size:14.3px;color:#62666c;">Add fields here...</div>
<div class="a" style="left:961.5px;top:618.8px;width:246px;height:87.90000000000009px;background:#fdfdfd;border:1px solid #dde0e5"></div>
<div class="t" style="left:972.0px;top:629.47px;font-size:14.8px;color:#111;letter-spacing:0.65px;-webkit-text-stroke:0.45px #111;">Color</div>
<div class="t" style="left:1097.8px;top:630.74px;font-size:13.3px;color:#999da3;">Add all</div>
<div class="a" style="left:1148px;top:631.5px;width:1px;height:12px;background:#d5d8dd;"></div>
<div class="t" style="left:1158.0px;top:630.74px;font-size:13.3px;color:#5f86d8;">Clear</div>
<div class="a" style="left:967.1px;top:664.3px;width:27px;height:27.3px;border:1px solid #d9dce1;border-radius:9px;background:#fdfdfd"></div>
<svg class="a" style="left:970px;top:670px;" width="22" height="16" viewBox="0 0 22 16" fill="none"><path d="M6.1 1.9 H3.6 Q1.6 1.9 1.6 4.4 V11.5 Q1.6 14 3.6 14 H6.1 Z" fill="#1f4fe0"/>
<rect x="8" y="1.9" width="4.3" height="12.1" fill="#dfb23a"/>
<path d="M14.2 1.9 H16.5 Q19 1.9 19 4.4 V11.5 Q19 14 16.5 14 H14.2 Z" fill="#ec6e7c"/></svg>
<div class="a" style="left:999.4px;top:663.7px;width:202.6px;height:27.6px;background:#dcf5e9;border-radius:11px"></div>
<div class="t" style="left:1008.0px;top:669.77px;font-size:14.8px;color:#111;letter-spacing:0.415px;-webkit-text-stroke:0.45px #111;">Measure Values</div>
<svg class="a" style="left:1180.5px;top:674.5px;" width="12" height="8" viewBox="0 0 12 8" fill="none"><path d="M1.2 1.3 L5.8 5.7 L10.4 1.3" stroke="#2b3a6b" stroke-width="1.4"/></svg>
<div class="a" style="left:961.5px;top:718.2px;width:246px;height:127.59999999999991px;background:#fdfdfd;border:1px solid #dde0e5"></div>
<div class="t" style="left:969.5px;top:728.97px;font-size:14.8px;color:#111;letter-spacing:0.45px;-webkit-text-stroke:0.45px #111;">Filters</div>
<div class="t" style="left:978.0px;top:766.90px;font-size:14.3px;color:#62666c;">Add fields here...</div>
<div class="t" style="left:994.5px;top:864.28px;font-size:15.5px;color:#111;-webkit-text-stroke:0.2px #111;">Convert to Visual Explorer</div>
<div class="t" style="left:990.0px;top:918.47px;font-size:16.1px;color:#222;">Update mode:</div>
<div class="t" style="left:1101.0px;top:918.47px;font-size:16.1px;color:#222;">Automatic</div>
<svg class="a" style="left:1176px;top:922px;" width="14" height="10" viewBox="0 0 14 10" fill="none"><path d="M2 2.6 L6.8 7.3 L11.6 2.6" stroke="#222" stroke-width="1.4"/></svg>
<div class="a" style="left:1215px;top:170px;width:289px;height:778px;background:#fdfdfd;"></div>
<div class="t" style="left:1287.0px;top:189.55px;font-size:15.3px;color:#111;-webkit-text-stroke:0.5px #111;">Fields</div>
<div class="t" style="left:1386.5px;top:190.18px;font-size:15.5px;color:#5c6066;letter-spacing:0.15px;-webkit-text-stroke:0.2px #5c6066;">Format</div>
<div class="a" style="left:1215px;top:226.5px;width:289px;height:1px;background:#e2e5e9;"></div>
<div class="a" style="left:1258px;top:224.7px;width:100px;height:3px;background:#2158d8;"></div>
<div class="a" style="left:1225.4px;top:238.2px;width:228.3px;height:29.3px;border:1px solid #d8dbe0;border-radius:10px;background:#fdfdfd"></div>
<div class="t" style="left:1236.8px;top:246.31px;font-size:15.7px;color:#5a5e64;">Search fields...</div>
<svg class="a" style="left:1430px;top:243px;" width="24" height="22" viewBox="0 0 24 22" fill="none"><circle cx="10.5" cy="8.7" r="6.9" stroke="#444" stroke-width="1.3"/><path d="M15.4 13.6 L19.5 17.6" stroke="#444" stroke-width="2.1"/></svg>
<div class="a" style="left:1464.4px;top:238.2px;width:29.4px;height:29.3px;border:1px solid #d8dbe0;border-radius:10px;background:#fdfdfd"></div>
<svg class="a" style="left:1464px;top:238px;" width="30" height="30" viewBox="0 0 30 30" fill="none"><path d="M6.2 20.6 Q7.4 22 8.9 21.2 Q10.2 20.3 11.3 14 Q12.3 9.3 13.6 9 Q14.9 8.7 15.8 9.4" stroke="#222" stroke-width="1.3"/>
<path d="M9 13.2 H13.7" stroke="#888" stroke-width="1.1"/>
<path d="M13.5 15.8 L16.6 19.3 M16.6 15.8 L13.5 19.3" stroke="#777" stroke-width="0.9"/>
<path d="M21.1 8.8 V15 M18.3 11.9 H23.9" stroke="#1f4fe0" stroke-width="1.5"/></svg>
<svg class="a" style="left:1226px;top:271px;" width="14" height="19" viewBox="0 0 14 19" fill="none"><path d="M2.3 1.5 L2.3 14.5 L5.3 11.6 L7.6 16.6 L9.5 15.8 L7.3 10.9 L11.3 10.7 Z" fill="#111" stroke="#fff" stroke-width="0.9" stroke-linejoin="round"/></svg>
<div class="t" style="left:1225.5px;top:288.63px;font-size:14.5px;color:#222;">Dimensions</div>
<svg class="a" style="left:1241.5px;top:319.0px;" width="14" height="13" viewBox="0 0 14 13" fill="none"><path d="M1.8 3.4 V1.5 H12.4 V3.4" stroke="#1f5ae6" stroke-width="1.3"/><path d="M7.1 1.6 V11.4 M4.8 11.5 H9.4" stroke="#1f5ae6" stroke-width="1.3"/></svg>
<div class="t" style="left:1263.2px;top:319.90px;font-size:14.3px;color:#222;">account_id</div>
<svg class="a" style="left:1241.5px;top:346.45px;" width="14" height="13" viewBox="0 0 14 13" fill="none"><path d="M1.8 3.4 V1.5 H12.4 V3.4" stroke="#1f5ae6" stroke-width="1.3"/><path d="M7.1 1.6 V11.4 M4.8 11.5 H9.4" stroke="#1f5ae6" stroke-width="1.3"/></svg>
<div class="t" style="left:1263.2px;top:347.35px;font-size:14.3px;color:#222;">account_manager</div>
<svg class="a" style="left:1241.5px;top:373.9px;" width="14" height="13" viewBox="0 0 14 13" fill="none"><path d="M1.8 3.4 V1.5 H12.4 V3.4" stroke="#1f5ae6" stroke-width="1.3"/><path d="M7.1 1.6 V11.4 M4.8 11.5 H9.4" stroke="#1f5ae6" stroke-width="1.3"/></svg>
<div class="t" style="left:1263.2px;top:374.80px;font-size:14.3px;color:#222;">account_name</div>
<svg class="a" style="left:1241px;top:398.35px;" width="14" height="15" viewBox="0 0 14 15" fill="none"><rect x="1.2" y="2.2" width="11.8" height="10.6" rx="2.2" stroke="#2a5fe0" stroke-width="1.2"/><path d="M1.4 4.9 H12.8" stroke="#2a5fe0" stroke-width="1.2"/><path d="M3.6 0.8 V2.8 M10.6 0.8 V2.8" stroke="#2a5fe0" stroke-width="1.1"/><path d="M4 9.9 H5.4 M6.6 9.9 H7.8 M9 9.9 H10.4 M6.6 7.6 H7.8 M9 7.6 H10.4" stroke="#5577cc" stroke-width="1"/></svg>
<div class="t" style="left:1263.2px;top:402.25px;font-size:14.3px;color:#222;">cancelled_at</div>
<svg class="a" style="left:1241.5px;top:428.8px;" width="14" height="13" viewBox="0 0 14 13" fill="none"><path d="M1.8 3.4 V1.5 H12.4 V3.4" stroke="#1f5ae6" stroke-width="1.3"/><path d="M7.1 1.6 V11.4 M4.8 11.5 H9.4" stroke="#1f5ae6" stroke-width="1.3"/></svg>
<div class="t" style="left:1263.2px;top:429.70px;font-size:14.3px;color:#222;">order_id</div>
<svg class="a" style="left:1241.5px;top:456.25px;" width="14" height="13" viewBox="0 0 14 13" fill="none"><path d="M1.8 3.4 V1.5 H12.4 V3.4" stroke="#1f5ae6" stroke-width="1.3"/><path d="M7.1 1.6 V11.4 M4.8 11.5 H9.4" stroke="#1f5ae6" stroke-width="1.3"/></svg>
<div class="t" style="left:1263.2px;top:457.15px;font-size:14.3px;color:#222;">payment_cycle</div>
<svg class="a" style="left:1241.5px;top:483.7px;" width="14" height="13" viewBox="0 0 14 13" fill="none"><path d="M1.8 3.4 V1.5 H12.4 V3.4" stroke="#1f5ae6" stroke-width="1.3"/><path d="M7.1 1.6 V11.4 M4.8 11.5 H9.4" stroke="#1f5ae6" stroke-width="1.3"/></svg>
<div class="t" style="left:1263.2px;top:484.60px;font-size:14.3px;color:#222;">product_id</div>
<svg class="a" style="left:1241.5px;top:511.15px;" width="14" height="13" viewBox="0 0 14 13" fill="none"><path d="M1.8 3.4 V1.5 H12.4 V3.4" stroke="#1f5ae6" stroke-width="1.3"/><path d="M7.1 1.6 V11.4 M4.8 11.5 H9.4" stroke="#1f5ae6" stroke-width="1.3"/></svg>
<div class="t" style="left:1263.2px;top:512.05px;font-size:14.3px;color:#222;">product_name</div>
<svg class="a" style="left:1241px;top:535.6px;" width="14" height="15" viewBox="0 0 14 15" fill="none"><rect x="1.2" y="2.2" width="11.8" height="10.6" rx="2.2" stroke="#2a5fe0" stroke-width="1.2"/><path d="M1.4 4.9 H12.8" stroke="#2a5fe0" stroke-width="1.2"/><path d="M3.6 0.8 V2.8 M10.6 0.8 V2.8" stroke="#2a5fe0" stroke-width="1.1"/><path d="M4 9.9 H5.4 M6.6 9.9 H7.8 M9 9.9 H10.4 M6.6 7.6 H7.8 M9 7.6 H10.4" stroke="#5577cc" stroke-width="1"/></svg>
<div class="t" style="left:1263.2px;top:539.50px;font-size:14.3px;color:#222;">purchased_at</div>
<svg class="a" style="left:1241.5px;top:566.05px;" width="14" height="13" viewBox="0 0 14 13" fill="none"><path d="M1.8 3.4 V1.5 H12.4 V3.4" stroke="#1f5ae6" stroke-width="1.3"/><path d="M7.1 1.6 V11.4 M4.8 11.5 H9.4" stroke="#1f5ae6" stroke-width="1.3"/></svg>
<div class="t" style="left:1263.2px;top:566.95px;font-size:14.3px;color:#222;">returned_at</div>
<svg class="a" style="left:1241.5px;top:593.5px;" width="14" height="13" viewBox="0 0 14 13" fill="none"><path d="M1.8 3.4 V1.5 H12.4 V3.4" stroke="#1f5ae6" stroke-width="1.3"/><path d="M7.1 1.6 V11.4 M4.8 11.5 H9.4" stroke="#1f5ae6" stroke-width="1.3"/></svg>
<div class="t" style="left:1263.2px;top:594.40px;font-size:14.3px;color:#222;">review</div>
<div class="a" style="left:1215px;top:609px;width:289px;height:1px;background:#e2e5e9;"></div>
<div class="t" style="left:1225.5px;top:630.59px;font-size:13.95px;color:#222;">Measures</div>
<svg class="a" style="left:1240.8px;top:660.9px;" width="14" height="14" viewBox="0 0 14 14" fill="none"><path d="M5.4 0.8 V12.8 M9 0.8 V12.8 M0.9 4.9 H13.3 M0.9 8.5 H13.3" stroke="#46a873" stroke-width="1.3"/></svg>
<div class="t" style="left:1263.2px;top:661.00px;font-size:14.3px;color:#222;">business_size</div>
<svg class="a" style="left:1240.8px;top:688.4499999999999px;" width="14" height="14" viewBox="0 0 14 14" fill="none"><path d="M5.4 0.8 V12.8 M9 0.8 V12.8 M0.9 4.9 H13.3 M0.9 8.5 H13.3" stroke="#46a873" stroke-width="1.3"/></svg>
<div class="t" style="left:1263.2px;top:688.55px;font-size:14.3px;color:#222;">days_to_close</div>
<svg class="a" style="left:1240.8px;top:716.0px;" width="14" height="14" viewBox="0 0 14 14" fill="none"><path d="M5.4 0.8 V12.8 M9 0.8 V12.8 M0.9 4.9 H13.3 M0.9 8.5 H13.3" stroke="#46a873" stroke-width="1.3"/></svg>
<div class="t" style="left:1263.2px;top:716.10px;font-size:14.3px;color:#222;">days_to_ship</div>
<svg class="a" style="left:1240.8px;top:743.55px;" width="14" height="14" viewBox="0 0 14 14" fill="none"><path d="M5.4 0.8 V12.8 M9 0.8 V12.8 M0.9 4.9 H13.3 M0.9 8.5 H13.3" stroke="#46a873" stroke-width="1.3"/></svg>
<div class="t" style="left:1263.2px;top:743.65px;font-size:14.3px;color:#222;">discount</div>
<svg class="a" style="left:1240.8px;top:771.1px;" width="14" height="14" viewBox="0 0 14 14" fill="none"><path d="M5.4 0.8 V12.8 M9 0.8 V12.8 M0.9 4.9 H13.3 M0.9 8.5 H13.3" stroke="#46a873" stroke-width="1.3"/></svg>
<div class="t" style="left:1263.2px;top:771.20px;font-size:14.3px;color:#222;">index</div>
<svg class="a" style="left:1240.8px;top:798.65px;" width="14" height="14" viewBox="0 0 14 14" fill="none"><path d="M5.4 0.8 V12.8 M9 0.8 V12.8 M0.9 4.9 H13.3 M0.9 8.5 H13.3" stroke="#46a873" stroke-width="1.3"/></svg>
<div class="t" style="left:1263.2px;top:798.75px;font-size:14.3px;color:#222;">price</div>
<svg class="a" style="left:1240.8px;top:826.2px;" width="14" height="14" viewBox="0 0 14 14" fill="none"><path d="M5.4 0.8 V12.8 M9 0.8 V12.8 M0.9 4.9 H13.3 M0.9 8.5 H13.3" stroke="#46a873" stroke-width="1.3"/></svg>
<div class="t" style="left:1263.2px;top:826.30px;font-size:14.3px;color:#222;">quantity</div>
<svg class="a" style="left:1240.8px;top:853.75px;" width="14" height="14" viewBox="0 0 14 14" fill="none"><path d="M5.4 0.8 V12.8 M9 0.8 V12.8 M0.9 4.9 H13.3 M0.9 8.5 H13.3" stroke="#46a873" stroke-width="1.3"/></svg>
<div class="t" style="left:1263.2px;top:853.85px;font-size:14.3px;color:#222;">rating</div>
<svg class="a" style="left:1240.8px;top:881.3px;" width="14" height="14" viewBox="0 0 14 14" fill="none"><path d="M5.4 0.8 V12.8 M9 0.8 V12.8 M0.9 4.9 H13.3 M0.9 8.5 H13.3" stroke="#46a873" stroke-width="1.3"/></svg>
<div class="t" style="left:1263.2px;top:881.40px;font-size:14.3px;color:#222;">shipping_cost</div>
<svg class="a" style="left:1240.8px;top:908.85px;" width="14" height="14" viewBox="0 0 14 14" fill="none"><path d="M5.4 0.8 V12.8 M9 0.8 V12.8 M0.9 4.9 H13.3 M0.9 8.5 H13.3" stroke="#46a873" stroke-width="1.3"/></svg>
<div class="t" style="left:1263.2px;top:908.95px;font-size:14.3px;color:#222;">shipping_latitude</div>
<svg class="a" style="left:1240.8px;top:936.4px;" width="14" height="14" viewBox="0 0 14 14" fill="none"><path d="M5.4 0.8 V12.8 M9 0.8 V12.8 M0.9 4.9 H13.3 M0.9 8.5 H13.3" stroke="#46a873" stroke-width="1.3"/></svg>
<div class="t" style="left:1263.2px;top:936.50px;font-size:14.3px;color:#222;">shipping_longitude</div>
<div class="a" style="left:1419.3px;top:864px;width:60px;height:60px;background:#000;border-radius:50%;box-shadow:0 3px 26px rgba(0,0,0,0.16)"></div>
<svg class="a" style="left:1432px;top:876px;" width="34" height="36" viewBox="0 0 34 36" fill="none"><path d="M7.5 2.8 H25.5 Q30.7 2.8 30.7 8 V33 L25 29.6 H7.5 Q4.2 29.6 4.2 26.3 V6.1 Q4.2 2.8 7.5 2.8 Z" fill="#fff"/>
<path d="M8.6 22.3 Q17.4 28 26.2 22.3" stroke="#000" stroke-width="1.5"/></svg>

</div>
</body></html>
